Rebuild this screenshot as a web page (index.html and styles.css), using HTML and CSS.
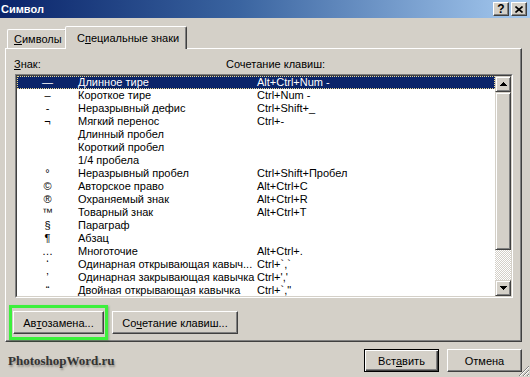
FILE: index.html
```html
<!DOCTYPE html>
<html lang="ru">
  <head>
    <meta charset="UTF-8" />
    <title>Символ</title>
    <link rel="stylesheet" href="styles.css">
  </head>
  <body>
    <!-- Caption bar -->
    <div class="titlebar">
      <span class="title">Символ</span>
      <div class="caption-buttons">
        <span class="cap-btn">?</span>
        <span class="cap-btn">
          <svg width="8" height="7" viewBox="0 0 8 7"><path d="M0.5 0.5 L7.5 6.5 M7.5 0.5 L0.5 6.5" stroke="#000" stroke-width="1.6"/></svg>
        </span>
      </div>
    </div>

    <div class="dialog">
      <div class="tabs">
        <div class="tab"><u>С</u>имволы</div>
        <div class="tab active">С<u>п</u>ециальные знаки</div>
      </div>

      <div class="panel">
        <div class="list-head">
          <span><u>З</u>нак:</span>
          <span>Сочетание клавиш:</span>
        </div>

        <div class="listbox">
          <div class="list-frame">
            <div class="rows">
              <div class="row selected"><span class="sym">—</span><span>Длинное тире</span><span>Alt+Ctrl+Num -</span></div>
              <div class="row"><span class="sym">–</span><span>Короткое тире</span><span>Ctrl+Num -</span></div>
              <div class="row"><span class="sym">-</span><span>Неразрывный дефис</span><span>Ctrl+Shift+_</span></div>
              <div class="row"><span class="sym">¬</span><span>Мягкий перенос</span><span>Ctrl+-</span></div>
              <div class="row"><span class="sym"></span><span>Длинный пробел</span><span></span></div>
              <div class="row"><span class="sym"></span><span>Короткий пробел</span><span></span></div>
              <div class="row"><span class="sym"></span><span>1/4 пробела</span><span></span></div>
              <div class="row"><span class="sym">°</span><span>Неразрывный пробел</span><span>Ctrl+Shift+Пробел</span></div>
              <div class="row"><span class="sym">©</span><span>Авторское право</span><span>Alt+Ctrl+C</span></div>
              <div class="row"><span class="sym">®</span><span>Охраняемый знак</span><span>Alt+Ctrl+R</span></div>
              <div class="row"><span class="sym">™</span><span>Товарный знак</span><span>Alt+Ctrl+T</span></div>
              <div class="row"><span class="sym">§</span><span>Параграф</span><span></span></div>
              <div class="row"><span class="sym">¶</span><span>Абзац</span><span></span></div>
              <div class="row"><span class="sym">…</span><span>Многоточие</span><span>Alt+Ctrl+.</span></div>
              <div class="row"><span class="sym">‘</span><span>Одинарная открывающая кавыч...</span><span>Ctrl+`,`</span></div>
              <div class="row"><span class="sym">’</span><span>Одинарная закрывающая кавычка</span><span>Ctrl+','</span></div>
              <div class="row"><span class="sym">“</span><span>Двойная открывающая кавычка</span><span>Ctrl+`,"</span></div>
            </div>

            <div class="scrollbar">
              <div class="sb-btn">
                <svg width="7" height="4" viewBox="0 0 7 4"><rect x="3" y="0" width="1" height="1"/><rect x="2" y="1" width="3" height="1"/><rect x="1" y="2" width="5" height="1"/><rect x="0" y="3" width="7" height="1"/></svg>
              </div>
              <div class="sb-thumb"></div>
              <div class="sb-track"></div>
              <div class="sb-btn">
                <svg width="7" height="4" viewBox="0 0 7 4"><rect x="0" y="0" width="7" height="1"/><rect x="1" y="1" width="5" height="1"/><rect x="2" y="2" width="3" height="1"/><rect x="3" y="3" width="1" height="1"/></svg>
              </div>
            </div>
          </div>
        </div>

        <div class="panel-buttons">
          <span class="highlight">
            <span class="button btn-auto">Ав<u>т</u>озамена...</span>
          </span>
          <span class="button btn-keys">Со<u>ч</u>етание клавиш...</span>
        </div>
      </div>

      <div class="footer">
        <span class="watermark">PhotoshopWord.ru</span>
        <div class="footer-buttons">
          <span class="button default">Вст<u>а</u>вить</span>
          <span class="button">Отмена</span>
        </div>
      </div>
    </div>

    <!-- size grip in the corner -->
    <svg class="grip" width="12" height="12" viewBox="0 0 12 12">
      <path d="M11 1 L1 11 M11 5 L5 11 M11 9 L9 11" stroke="#808080" stroke-width="1"/>
      <path d="M11 2 L2 11 M11 6 L6 11 M11 10 L10 11" stroke="#ffffff" stroke-width="1"/>
    </svg>
  </body>
</html>
```

FILE: styles.css
```css
/* basic styling */
* {
  margin: 0;
  padding: 0;
  box-sizing: border-box;
}
body {
  position: relative;
  width: 530px;
  height: 377px;
  overflow: hidden;
  background: #d4d0c8;
  font-family: "Liberation Sans", Arial, sans-serif;
  font-size: 11px;
  color: #000000;
}
u {
  text-decoration: underline;
  text-underline-offset: 1px;
}

/* Caption bar */
.titlebar {
  height: 18px;
  display: flex;
  align-items: center;
  justify-content: space-between;
  padding: 0 3px 0 1px;
  background: linear-gradient(to right, #0a246a 0%, #3a64a0 45%, #a6caf0 100%);
}
.title {
  color: #ffffff;
  font-weight: bold;
  font-size: 11px;
}
.caption-buttons {
  display: flex;
  gap: 2px;
}
.cap-btn {
  width: 16px;
  height: 14px;
  display: flex;
  align-items: center;
  justify-content: center;
  background: #d4d0c8;
  border: 1px solid;
  border-color: #ffffff #404040 #404040 #ffffff;
  box-shadow: inset -1px -1px #808080;
  font-weight: bold;
  font-size: 12px;
  line-height: 12px;
}

/* Dialog body */
.dialog {
  padding: 0 8px 0 5px;
}

/* Tabs */
.tabs {
  display: flex;
  align-items: flex-end;
  height: 30px;
  padding-left: 2px;
}
.tab {
  width: 60px;
  height: 19px;
  padding: 3px 0 0 6px;
  line-height: 13px;
  border: 1px solid;
  border-bottom: none;
  border-color: #ffffff #404040 transparent #ffffff;
  border-radius: 2px 2px 0 0;
  box-shadow: inset -1px 0 #808080;
  white-space: nowrap;
}
.tab.active {
  position: relative;
  z-index: 1;
  width: 122px;
  height: 23px;
  margin: 0 0 -1px -2px;
  padding: 5px 0 0 11px;
  background: #d4d0c8;
}

/* Tab page */
.panel {
  height: 294px;
  padding: 9px 8px 0 9px;
  border: 1px solid;
  border-color: #ffffff #404040 #404040 #ffffff;
  box-shadow: inset -1px -1px #808080;
}
.list-head {
  display: grid;
  grid-template-columns: 212px auto;
  height: 13px;
  line-height: 13px;
  margin-left: -1px;
}

/* List box */
.listbox {
  margin-top: 3px;
  height: 224px;
  border: 1px solid;
  border-color: #808080 #ffffff #ffffff #808080;
}
.list-frame {
  display: flex;
  height: 100%;
  border: 1px solid;
  border-color: #404040 #d4d0c8 #d4d0c8 #404040;
  background: #ffffff;
}
.rows {
  flex: 1;
  overflow: hidden;
}
.row {
  display: grid;
  grid-template-columns: 61px 179px auto;
  height: 13px;
  line-height: 13px;
  white-space: nowrap;
}
.row .sym {
  text-align: center;
}
.row.selected {
  background: #0a246a;
  color: #ffffff;
  outline: 1px dotted #e8d890;
  outline-offset: -1px;
}

/* Scroll bar */
.scrollbar {
  width: 16px;
  display: flex;
  flex-direction: column;
}
.sb-btn,
.sb-thumb {
  background: #d4d0c8;
  border: 1px solid;
  border-color: #d4d0c8 #404040 #404040 #d4d0c8;
  box-shadow: inset 1px 1px #ffffff, inset -1px -1px #808080;
}
.sb-btn {
  height: 16px;
  display: flex;
  align-items: center;
  justify-content: center;
}
.sb-thumb {
  height: 158px;
}
.sb-track {
  flex: 1;
  background: repeating-conic-gradient(#ffffff 0 25%, #d4d0c8 0 50%) 0 0 / 2px 2px;
}

/* Push buttons */
.button {
  display: flex;
  align-items: center;
  justify-content: center;
  height: 23px;
  background: #d4d0c8;
  border: 1px solid;
  border-color: #ffffff #404040 #404040 #ffffff;
  box-shadow: inset -1px -1px #808080;
  white-space: nowrap;
}
.button.default {
  border-color: #000000;
  box-shadow: inset 1px 1px #ffffff, inset -1px -1px #404040, inset -2px -2px #808080;
}

.panel-buttons {
  display: flex;
  align-items: center;
  gap: 4px;
  margin: 7px 0 0 -6px;
}
.highlight {
  padding: 3px 1px;
  border: 3px solid #3cf03c;
  box-shadow: 1px 1px 2px rgba(0, 90, 0, 0.35);
}
.btn-auto {
  width: 91px;
}
.btn-keys {
  width: 126px;
}

/* Bottom row */
.footer {
  display: flex;
  align-items: center;
  justify-content: space-between;
  height: 23px;
  margin-top: 7px;
}
.watermark {
  margin: 0 0 0 3px;
  font-family: "Liberation Serif", "Times New Roman", serif;
  font-weight: bold;
  font-size: 13px;
  color: #333333;
  text-shadow: 1px 2px 2px rgba(0, 0, 0, 0.3);
}
.footer-buttons {
  display: flex;
  gap: 8px;
}
.footer-buttons .button {
  width: 75px;
}

.grip {
  position: absolute;
  right: 0;
  bottom: 0;
}
```
